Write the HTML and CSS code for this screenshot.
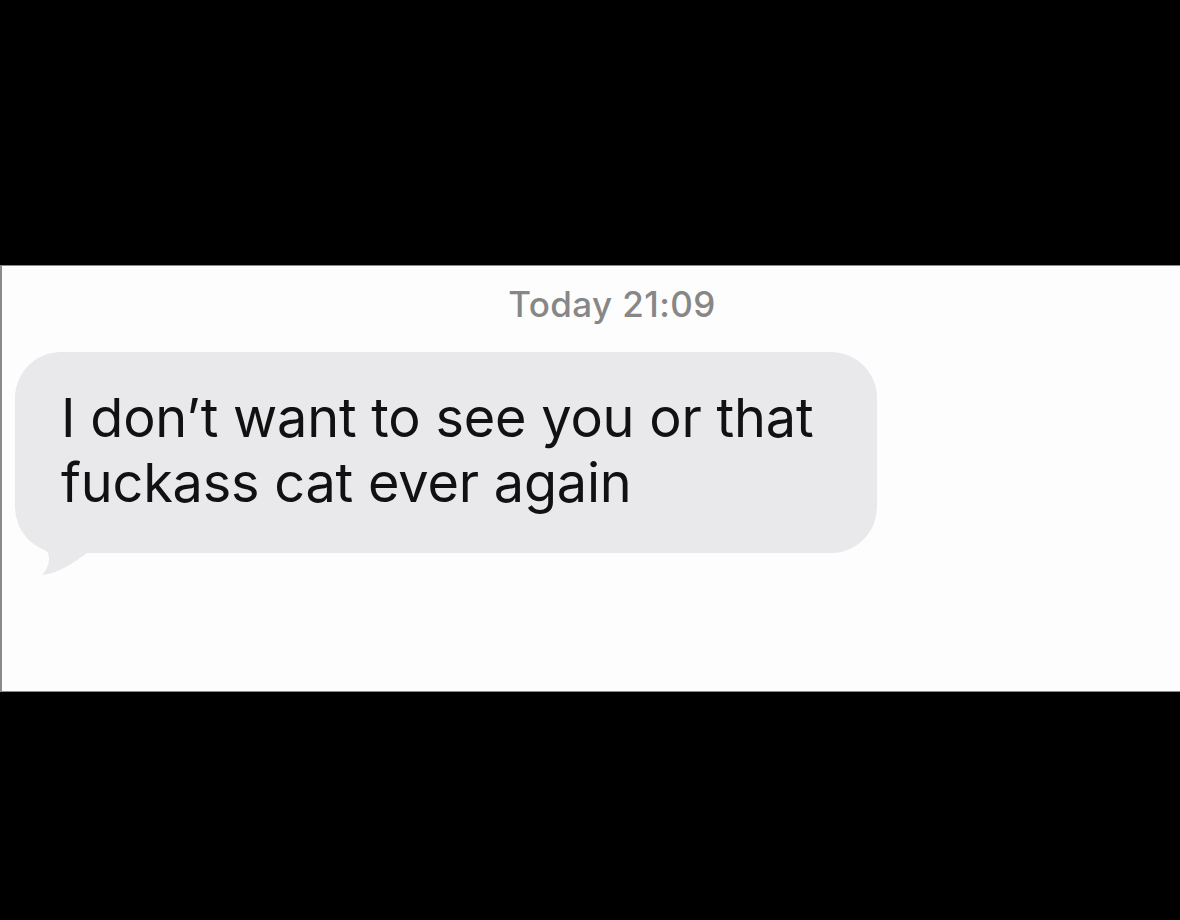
FILE: index.html
```html
<!DOCTYPE html>
<html lang="en">
<head>
<meta charset="utf-8">
<title>Message</title>
<link rel="stylesheet" href="styles.css">
</head>
<body>
<main class="band">
  <div class="stamp">Today 21:09</div>
  <div class="row">
    <div class="bubble">
      <svg class="tail" width="100" height="106" viewBox="0 0 100 106" aria-hidden="true">
        <path d="M0,0 L0,17 C2,45 20,65 33,80 C36,88 32,97 27,102 C45,100 58,90 72,80 L72,0 Z" fill="#e9e9eb"/>
      </svg>
      <p class="msg">I don’t want to see you or that<br>fuckass cat ever again</p>
    </div>
  </div>
</main>
</body>
</html>
```

FILE: styles.css
```css
html, body {
  margin: 0;
  padding: 0;
  background: #000;
  height: 100%;
}
body {
  padding-top: 265px;
  box-sizing: border-box;
  font-family: Inter, "Noto Sans", "Liberation Sans", sans-serif;
}
.band {
  height: 427px;
  background: #fdfdfd;
  border-top: 1px solid #8a8a8a;
  border-bottom: 1px solid #8a8a8a;
  border-left: 2px solid #8a8a8a;
  box-sizing: border-box;
  display: flex;
  flex-direction: column;
}
.stamp {
  padding-top: 18px;
  padding-left: 42px;
  text-align: center;
  color: #878787;
  font-size: 35px;
  line-height: 40px;
  font-weight: 500;
  letter-spacing: 0.4px;
}
.row {
  display: flex;
  padding-left: 13px;
  padding-top: 28px;
}
.bubble {
  position: relative;
  width: 862px;
  height: 201px;
  box-sizing: border-box;
  background: #e9e9eb;
  border-radius: 46px;
  padding: 33px 0 0 46px;
}
.tail {
  position: absolute;
  left: 0;
  top: 121px;
}
.msg {
  position: relative;
  margin: 0;
  color: #111;
  font-size: 54px;
  line-height: 65px;
  font-weight: 400;
  letter-spacing: -0.2px;
}
```
